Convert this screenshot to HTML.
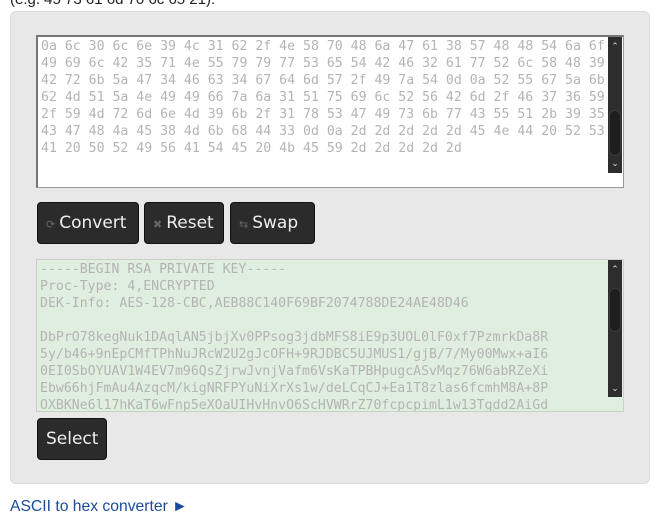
<!DOCTYPE html>
<html><head><style>
body{margin:0;width:661px;height:518px;background:#fff;position:relative;overflow:hidden;font-family:"Liberation Sans",sans-serif}
.top{position:absolute;left:10px;top:-9px;font-size:15px;color:#222}
.panel{position:absolute;left:10px;top:11px;width:640px;height:473px;background:#e8e8e8;border-radius:6px;border:1px solid #ddd;box-sizing:border-box}
.ta{position:absolute;left:36px;width:588px;height:153px;box-sizing:border-box;overflow:hidden;font-family:"DejaVu Sans Mono","Liberation Mono",monospace;font-size:13.2px;line-height:17px;color:#b4b4b4;padding:1px 0 0 3px;white-space:pre}
.t1{top:35px;background:#fff;border:1px solid #999;border-top:2px solid #777;border-left:2px solid #777}
.t2{top:259px;background:#dfeedf;border:1px solid #c8d0c8}
.sb{position:absolute;right:1px;width:14px;background:#2d2d2d}
.sb .th{position:absolute;left:1px;width:12px;background:#1e1e1e;border-radius:6px;border:1px solid #3a3a3a;box-sizing:border-box}
.arr{position:absolute;left:0;width:14px;text-align:center;color:#ddd;font-size:9px;font-family:"DejaVu Sans",sans-serif;line-height:10px}
.btn{position:absolute;top:202px;height:42px;background:#2b2b2b;border:1px solid #111;border-radius:4px;box-sizing:border-box;color:#eee;font-family:"DejaVu Sans",sans-serif;font-size:17px;line-height:40px;padding-left:8px}
.ic{color:#666;font-size:11px;margin-right:4px}
.link{position:absolute;left:10px;top:498px;font-size:15.7px;color:#1a4b9b}
</style></head><body>
<div class="top">(e.g. 45 73 61 6d 70 6c 65 21).</div>
<div class="panel"></div>
<div class="ta t1">0a 6c 30 6c 6e 39 4c 31 62 2f 4e 58 70 48 6a 47 61 38 57 48 48 54 6a 6f
49 69 6c 42 35 71 4e 55 79 79 77 53 65 54 42 46 32 61 77 52 6c 58 48 39
42 72 6b 5a 47 34 46 63 34 67 64 6d 57 2f 49 7a 54 0d 0a 52 55 67 5a 6b
62 4d 51 5a 4e 49 49 66 7a 6a 31 51 75 69 6c 52 56 42 6d 2f 46 37 36 59
2f 59 4d 72 6d 6e 4d 39 6b 2f 31 78 53 47 49 73 6b 77 43 55 51 2b 39 35
43 47 48 4a 45 38 4d 6b 68 44 33 0d 0a 2d 2d 2d 2d 2d 45 4e 44 20 52 53
41 20 50 52 49 56 41 54 45 20 4b 45 59 2d 2d 2d 2d 2d
<div class="sb" style="top:0;height:136px"><div class="arr" style="top:5px">&#8963;</div><div class="th" style="top:73px;height:46px"></div><div class="arr" style="top:122px">&#8964;</div></div></div>
<div class="btn" style="left:37px;width:102px"><span class="ic">&#10227;</span>Convert</div>
<div class="btn" style="left:144px;width:80px"><span class="ic">&#10006;</span>Reset</div>
<div class="btn" style="left:230px;width:85px"><span class="ic">&#8646;</span>Swap</div>
<div class="ta t2">-----BEGIN RSA PRIVATE KEY-----
Proc-Type: 4,ENCRYPTED
DEK-Info: AES-128-CBC,AEB88C140F69BF2074788DE24AE48D46

DbPrO78kegNuk1DAqlAN5jbjXv0PPsog3jdbMFS8iE9p3UOL0lF0xf7PzmrkDa8R
5y/b46+9nEpCMfTPhNuJRcW2U2gJcOFH+9RJDBC5UJMUS1/gjB/7/My00Mwx+aI6
0EI0SbOYUAV1W4EV7m96QsZjrwJvnjVafm6VsKaTPBHpugcASvMqz76W6abRZeXi
Ebw66hjFmAu4AzqcM/kigNRFPYuNiXrXs1w/deLCqCJ+Ea1T8zlas6fcmhM8A+8P
OXBKNe6l17hKaT6wFnp5eXOaUIHvHnvO6ScHVWRrZ70fcpcpimL1w13Tgdd2AiGd
<div class="sb" style="top:0;height:137px"><div class="arr" style="top:5px">&#8963;</div><div class="th" style="top:28px;height:44px"></div><div class="arr" style="top:124px">&#8964;</div></div></div>
<div class="btn" style="left:37px;top:418px;width:70px">Select</div>
<div class="link">ASCII to hex converter &#9658;</div>
</body></html>
